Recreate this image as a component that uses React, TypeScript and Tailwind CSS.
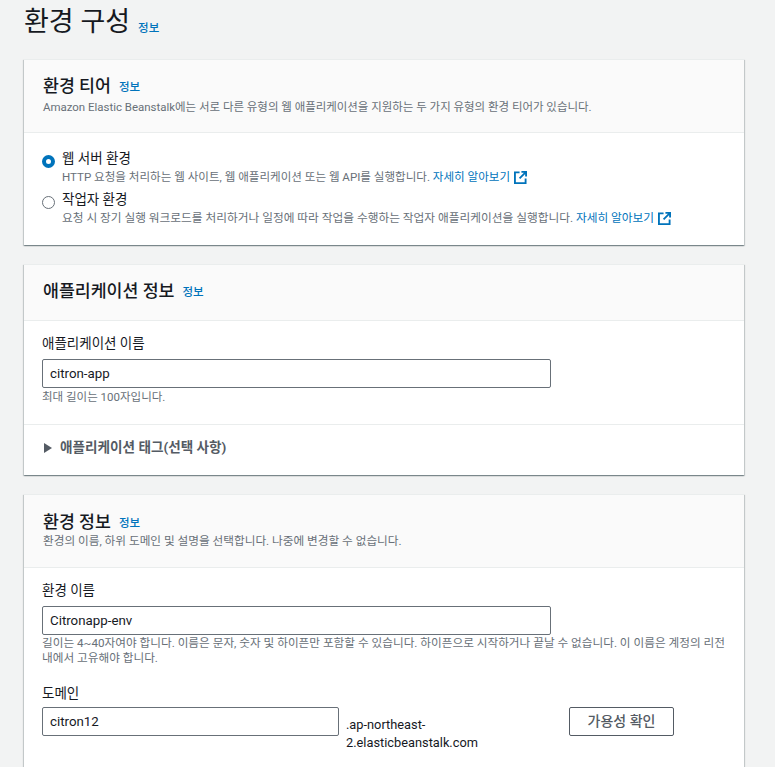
import type { ReactNode } from 'react';

const FONT = "font-['Roboto','Noto_Sans_CJK_KR',sans-serif]";

function InfoLink({ className = '' }: { className?: string }) {
  return <a className={`text-[11.5px] font-medium leading-4 text-[#0073bb] ${className}`}>정보</a>;
}

function ExternalIcon() {
  return (
    <svg viewBox="0 0 14 14" className="ml-[4px] inline-block h-[13px] w-[13px] align-[-3px]" fill="none" stroke="#0073bb" strokeWidth="2">
      <path d="M6 1.5H1v11.500h11.500V8" />
      <path d="M8 1h5v5M13 1 6 8" />
    </svg>
  );
}

function Card({ title, desc, headerClass, descClass = 'text-[11.460px]', children }: { title: string; desc?: string; headerClass: string; descClass?: string; children: ReactNode }) {
  return (
    <section className="mr-[31px] bg-white shadow-[0_1px_1px_0_rgba(0,28,36,0.3),1px_1px_1px_0_rgba(0,28,36,0.15),-1px_1px_1px_0_rgba(0,28,36,0.15)]">
      <header className={`border-y border-[#eaeded] bg-[#fafafa] px-[19px] ${headerClass}`}>
        <h2 className="flex items-center text-[17.300px] font-medium leading-[25px] text-[#16191f]">
          {title}
          <InfoLink className="ml-2" />
        </h2>
        {desc && <p className={`leading-4 text-[#687078] ${descClass}`}>{desc}</p>}
      </header>
      {children}
    </section>
  );
}

function TextField({ value, className = 'w-[509px]' }: { value: string; className?: string }) {
  return (
    <div className={`flex h-[29px] items-center rounded-[2px] border border-[#687078] bg-white px-[7px] text-[13.300px] text-[#16191f] ${className}`}>
      {value}
    </div>
  );
}

function TierOption({ checked, title, descClass, children }: { checked?: boolean; title: string; descClass: string; children: ReactNode }) {
  return (
    <div className="flex h-[41px]">
      <span
        className={`mt-[5px] h-[13px] w-[13px] shrink-0 rounded-full bg-white ${
          checked ? 'border-[4px] border-[#0073bb]' : 'border border-[#687078]'
        }`}
      />
      <div className="ml-[7px]">
        <div className="text-[13.500px] leading-[17px] text-[#16191f]">{title}</div>
        <p className={`mt-[2px] whitespace-nowrap leading-[16px] text-[#687078] ${descClass}`}>{children}</p>
      </div>
    </div>
  );
}

export default function App() {
  return (
    <div className={`h-[767px] overflow-hidden bg-[#f2f3f3] pl-6 ${FONT}`}>
      <div className="flex h-[59px] items-start pt-[4px]">
        <h1 className="text-[27px] font-normal leading-9 text-[#16191f]">환경 구성</h1>
        <InfoLink className="ml-2 mt-[16px]" />
      </div>

      <Card
        title="환경 티어"
        desc="Amazon Elastic Beanstalk에는 서로 다른 유형의 웹 애플리케이션을 지원하는 두 가지 유형의 환경 티어가 있습니다."
        headerClass="h-[74px] pt-[14px]"
      >
        <div className="h-[112px] pl-[18px] pt-[17px]">
          <TierOption checked title="웹 서버 환경" descClass="text-[11.550px]">
            HTTP 요청을 처리하는 웹 사이트, 웹 애플리케이션 또는 웹 API를 실행합니다.{' '}
            <a className="text-[#0073bb]">자세히 알아보기</a>
            <ExternalIcon />
          </TierOption>
          <TierOption title="작업자 환경" descClass="text-[11.700px]">
            요청 시 장기 실행 워크로드를 처리하거나 일정에 따라 작업을 수행하는 작업자 애플리케이션을 실행합니다.{' '}
            <a className="text-[#0073bb]">자세히 알아보기</a>
            <ExternalIcon />
          </TierOption>
        </div>
      </Card>

      <div className="h-[19px]" />

      <Card title="애플리케이션 정보" headerClass="h-[57px] pt-[14px]">
        <div className="h-[104px] border-b border-[#eaeded] px-[18px] pt-[12px]">
          <label className="block text-[13.500px] leading-5 text-[#16191f]">애플리케이션 이름</label>
          <div className="mt-[6px]">
            <TextField value="citron-app" />
          </div>
          <p className="mt-[1px] text-[11.500px] leading-4 text-[#687078]">최대 길이는 100자입니다.</p>
        </div>
        <div className="flex h-[50px] items-center pb-[5px] pl-[20px]">
          <svg viewBox="0 0 8 10" className="h-[10px] w-[8px]" fill="#545b64">
            <path d="M0 0l8 5-8 5z" />
          </svg>
          <span className="ml-[8px] text-[13.600px] font-bold text-[#545b64]">애플리케이션 태그(선택 사항)</span>
        </div>
      </Card>

      <div className="h-[19px]" />

      <Card
        title="환경 정보"
        desc="환경의 이름, 하위 도메인 및 설명을 선택합니다. 나중에 변경할 수 없습니다."
        headerClass="h-[74px] pt-[15px]"
        descClass="-mt-[2px] text-[11.650px]"
      >
        <div className="h-[200px] px-[18px] pt-[12px]">
          <label className="block text-[13.500px] leading-5 text-[#16191f]">환경 이름</label>
          <div className="mt-[6px]">
            <TextField value="Citronapp-env" />
          </div>
          <p className="mt-[1px] text-[11.650px] leading-[15px] text-[#687078]">
            길이는 4~40자여야 합니다. 이름은 문자, 숫자 및 하이픈만 포함할 수 있습니다. 하이픈으로 시작하거나 끝날 수 없습니다. 이 이름은 계정의 리전
            <br />
            내에서 고유해야 합니다.
          </p>
          <label className="mt-[17px] block text-[13.500px] leading-5 text-[#16191f]">도메인</label>
          <div className="mt-[4px] flex items-start">
            <TextField value="citron12" className="w-[297px]" />
            <div className="ml-[7px] w-[150px] pt-[9px] text-[12.800px] leading-[18px] text-[#16191f]">.ap-northeast-2.elasticbeanstalk.com</div>
            <button className="ml-[73px] h-[29px] w-[105px] rounded-[2px] border border-[#545b64] bg-white text-[14px] font-medium text-[#545b64]">
              가용성 확인
            </button>
          </div>
        </div>
      </Card>
    </div>
  );
}
